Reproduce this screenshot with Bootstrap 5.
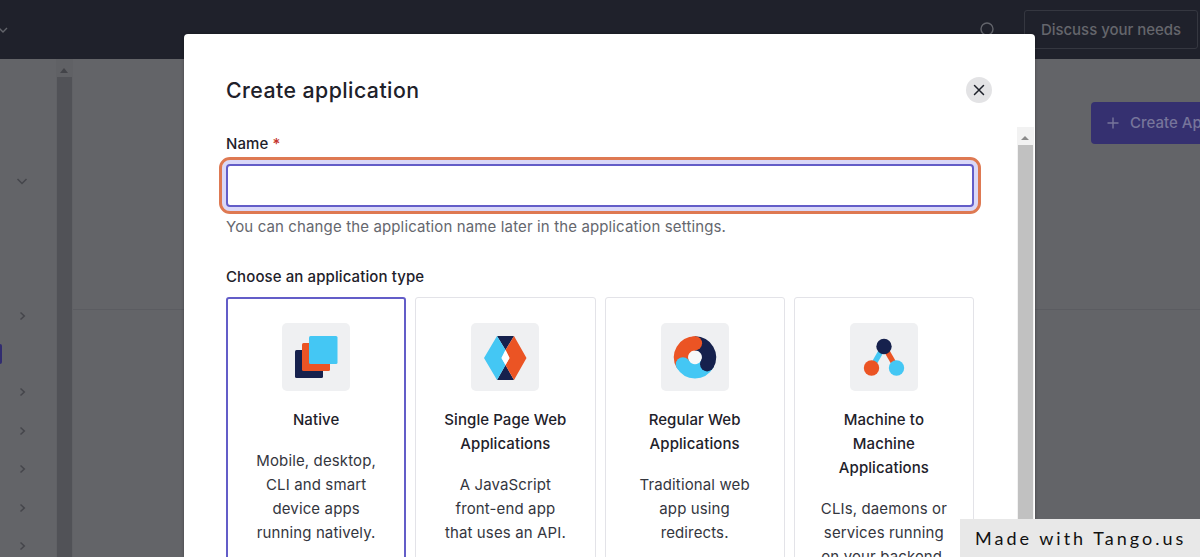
<!DOCTYPE html>
<html lang="en">
<head>
<meta charset="utf-8">
<meta name="viewport" content="width=device-width, initial-scale=1">
<title>Create application</title>
<link href="https://cdn.jsdelivr.net/npm/bootstrap@5.3.0/dist/css/bootstrap.min.css" rel="stylesheet">
<style>
body{font-family:Inter,"Liberation Sans",sans-serif;font-size:15px;line-height:24px;letter-spacing:.13px;color:#1e212a;background:#636468;height:557px;overflow:hidden}
svg{display:block;flex-shrink:0}
.topbar{height:59px;background:#1f212b;padding:0 2px 0 0}
.topbar .find{margin-right:29px;color:#62646b}
.discuss{height:39px;width:174px;border:1px solid #353740;border-radius:3px;color:#65666c;font-weight:500;font-size:15px;letter-spacing:-.03px;padding:1px 0 0}
.sidebar{width:56px;color:#45464b}
.track{width:17px;background:#606165;padding:0 1px 0 0}
.track .thumb{background:#515257;width:15px}
.chev{margin-left:15px;height:38.4px}
.marker{width:2px;height:20px;background:#312c70;border-radius:0 3px 3px 0}
.create{margin:43px -40px 0 0;width:149px;height:42px;background:#353070;color:#77759b;border-radius:4px;padding:0 0 0 15px;font-weight:500;font-size:15px;white-space:nowrap}
.rule{height:1px;background:#5b5c61;margin-top:165px}
.veil{inset:0;z-index:5;padding:34px 0 0 183.5px}
.dialog-box{width:851px;height:523px;background:#fff;border-radius:4px 4px 0 0;box-shadow:0 0 3px rgba(0,0,0,.35)}
.dialog-head{height:93px;padding:14px 42.5px 0}
.dialog-head h1{font-size:21.3px;font-weight:500;letter-spacing:.44px;line-height:30px}
.shut{width:26px;height:26px;border-radius:50%;background:#e3e3e5;border:0;padding:0;color:#1e212a}
.dialog-main{width:833.5px;padding:5px 43px 0 42.5px}
.lbl{font-weight:500;font-size:15px;line-height:24px;letter-spacing:.1px}
.req{color:#c4342b}
.field{height:43px;margin-top:8px;border:2px solid #635dc8;border-radius:4px;box-shadow:0 0 0 4px #dad8f8;outline:3px solid #de7952;outline-offset:4px;padding:0 10px}
.field:focus{border-color:#635dc8;box-shadow:0 0 0 4px #dad8f8}
.help{color:#65676e;margin-top:8px}
.types{gap:9px;height:290px;margin-top:8px}
.kind{width:180.3px;border:1px solid #e3e3e8;border-radius:3px;padding:25px 19px 0;text-align:center}
.kind.chosen{border:2px solid #635dc8;padding:24px 18px 0}
.tile{width:68px;height:68px;border-radius:5px;background:#eff0f2;margin:0 auto 17px}
.kind h2{font-size:15px;line-height:24px;font-weight:500;letter-spacing:.08px;margin:0 0 17px}
.kind p{margin:0;color:#34363e}
.bar{width:17px;background:#f2f2f2;margin-right:1px}
.bar .thumb{width:15px;background:#c1c1c1;margin-left:1px}
.bar .up,.track .up{height:18px}
.tango{right:0;top:519px;width:240px;height:38px;background:#e8e8e8;z-index:9;font:400 18px/39px Lato,sans-serif;letter-spacing:3px;color:#111;padding-left:15px;white-space:nowrap}
</style>
</head>
<body class="position-relative">
<nav class="topbar d-flex align-items-center justify-content-between">
  <svg width="9" height="8" viewBox="0 0 9 8" fill="none" stroke="#62646b" stroke-width="1.4"><path d="M-1 2L3 6L7 2"/></svg>
  <div class="d-flex align-items-center">
    <svg class="find" width="16" height="16" viewBox="0 0 16 16" fill="none" stroke="currentColor" stroke-width="1.4"><circle cx="8" cy="7" r="6"/><path d="M12 12l3 3"/></svg>
    <button class="btn discuss">Discuss your needs</button>
  </div>
</nav>
<div class="d-flex" style="height:498px">
  <aside class="sidebar">
    <div class="chev d-flex align-items-center" style="margin-top:103px"><svg width="14" height="14" viewBox="0 0 14 14" fill="none" stroke="currentColor" stroke-width="1.5"><path d="M2.5 5L7 9.5L11.5 5"/></svg></div>
    <div class="chev d-flex align-items-center" style="margin-top:96px"><svg width="14" height="14" viewBox="0 0 14 14" fill="none" stroke="currentColor" stroke-width="1.5"><path d="M5.5 3.5L9.3 7L5.5 10.5"/></svg></div>
    <div class="d-flex align-items-center" style="height:38.4px"><div class="marker"></div></div>
    <div class="chev d-flex align-items-center"><svg width="14" height="14" viewBox="0 0 14 14" fill="none" stroke="currentColor" stroke-width="1.5"><path d="M5.5 3.5L9.3 7L5.5 10.5"/></svg></div>
    <div class="chev d-flex align-items-center"><svg width="14" height="14" viewBox="0 0 14 14" fill="none" stroke="currentColor" stroke-width="1.5"><path d="M5.5 3.5L9.3 7L5.5 10.5"/></svg></div>
    <div class="chev d-flex align-items-center"><svg width="14" height="14" viewBox="0 0 14 14" fill="none" stroke="currentColor" stroke-width="1.5"><path d="M5.5 3.5L9.3 7L5.5 10.5"/></svg></div>
    <div class="chev d-flex align-items-center"><svg width="14" height="14" viewBox="0 0 14 14" fill="none" stroke="currentColor" stroke-width="1.5"><path d="M5.5 3.5L9.3 7L5.5 10.5"/></svg></div>
    <div class="chev d-flex align-items-center"><svg width="14" height="14" viewBox="0 0 14 14" fill="none" stroke="currentColor" stroke-width="1.5"><path d="M5.5 3.5L9.3 7L5.5 10.5"/></svg></div>
  </aside>
  <div class="track d-flex flex-column align-items-center">
    <div class="up d-flex align-items-center pt-1"><svg width="8" height="5" viewBox="0 0 8 5" fill="#434449"><path d="M0 5L4 0L8 5Z"/></svg></div>
    <div class="thumb flex-grow-1"></div>
  </div>
  <main class="flex-grow-1 overflow-hidden">
    <div class="d-flex justify-content-end">
      <button class="create border-0 d-flex align-items-center justify-content-start flex-shrink-0">
        <svg class="me-2" width="14" height="14" viewBox="0 0 14 14" fill="none" stroke="currentColor" stroke-width="1.4"><path d="M7 1.5V12.5M1.5 7H12.5"/></svg>
        <span class="flex-shrink-0" style="padding-left:2px">Create App</span>
      </button>
    </div>
    <div class="rule"></div>
  </main>
</div>

<div class="veil position-absolute">
  <section class="dialog-box d-flex flex-column">
    <div class="dialog-head d-flex align-items-center justify-content-between flex-shrink-0">
      <h1 class="m-0 pt-1">Create application</h1>
      <button class="shut d-flex align-items-center justify-content-center mt-1" aria-label="Close"><svg width="12" height="12" viewBox="0 0 12 12" fill="none" stroke="currentColor" stroke-width="1.5" stroke-linecap="round"><path d="M1.5 1.5L10.5 10.5M10.5 1.5L1.5 10.5"/></svg></button>
    </div>
    <div class="d-flex flex-grow-1 overflow-hidden">
      <div class="dialog-main">
        <label class="lbl d-block" for="name">Name <span class="req">*</span></label>
        <input id="name" class="field form-control" type="text">
        <div class="help">You can change the application name later in the application settings.</div>
        <div class="lbl" style="margin-top:26px">Choose an application type</div>
        <div class="types d-flex">
          <div class="kind chosen">
            <div class="tile"><svg width="68" height="68" viewBox="0 0 68 68"><rect x="13" y="27" width="28" height="28" rx="1.5" fill="#16214d"/><rect x="20" y="20" width="28" height="28" rx="1.5" fill="#eb5424"/><rect x="27" y="13" width="28.5" height="28" rx="1.5" fill="#44c7f4"/></svg></div>
            <h2>Native</h2>
            <p>Mobile, desktop,<br>CLI and smart<br>device apps<br>running natively.</p>
          </div>
          <div class="kind">
            <div class="tile"><svg width="68" height="68" viewBox="0 0 68 68"><path d="M26 13H43L34.5 27ZM26 57H43L34.5 42Z" fill="#16214d"/><path d="M26 13L34.5 27L30.5 35L34.5 42L26 57L13 35Z" fill="#44c7f4"/><path d="M43 13L34.5 27L38.5 35L34.5 42L43 57L55.5 35Z" fill="#eb5424"/><path d="M34.5 27L38.5 35L34.5 42L30.5 35Z" fill="#fff"/></svg></div>
            <h2>Single Page Web<br>Applications</h2>
            <p>A JavaScript<br>front-end app<br>that uses an API.</p>
          </div>
          <div class="kind">
            <div class="tile"><svg width="68" height="68" viewBox="0 0 68 68"><circle cx="34" cy="34.3" r="9" fill="#f7f8f9"/><g fill="none" stroke-width="14.2"><path d="M34 20.3A14 14 0 0 1 46.12 41.3" stroke="#16214d"/><path d="M46.12 41.3A14 14 0 0 1 21.88 41.3" stroke="#44c7f4"/><path d="M21.88 41.3A14 14 0 0 1 34 20.3" stroke="#eb5424"/></g><circle cx="34" cy="20.3" r="7.1" fill="#eb5424"/><circle cx="46.12" cy="41.3" r="7.1" fill="#16214d"/><circle cx="21.88" cy="41.3" r="7.1" fill="#44c7f4"/></svg></div>
            <h2>Regular Web<br>Applications</h2>
            <p>Traditional web<br>app using<br>redirects.</p>
          </div>
          <div class="kind">
            <div class="tile"><svg width="68" height="68" viewBox="0 0 68 68"><path d="M34 23L21.5 45" stroke="#44c7f4" stroke-width="5.5"/><path d="M34 23L46.5 45" stroke="#eb5424" stroke-width="5.5"/><circle cx="34" cy="23.5" r="7.7" fill="#16214d"/><circle cx="21.5" cy="45" r="7.7" fill="#eb5424"/><circle cx="46.5" cy="45" r="7.7" fill="#44c7f4"/></svg></div>
            <h2>Machine to<br>Machine<br>Applications</h2>
            <p>CLIs, daemons or<br>services running<br>on your backend.</p>
          </div>
        </div>
      </div>
      <div class="bar d-flex flex-column">
        <div class="up d-flex align-items-center justify-content-center pt-1"><svg width="8" height="4" viewBox="0 0 8 4" fill="#8b8b8b"><path d="M0 4L4 0L8 4Z"/></svg></div>
        <div class="thumb flex-grow-1"></div>
      </div>
    </div>
  </section>
</div>
<div class="tango position-absolute">Made with Tango.us</div>
<script src="https://cdn.jsdelivr.net/npm/bootstrap@5.3.0/dist/js/bootstrap.bundle.min.js"></script>
</body>
</html>
